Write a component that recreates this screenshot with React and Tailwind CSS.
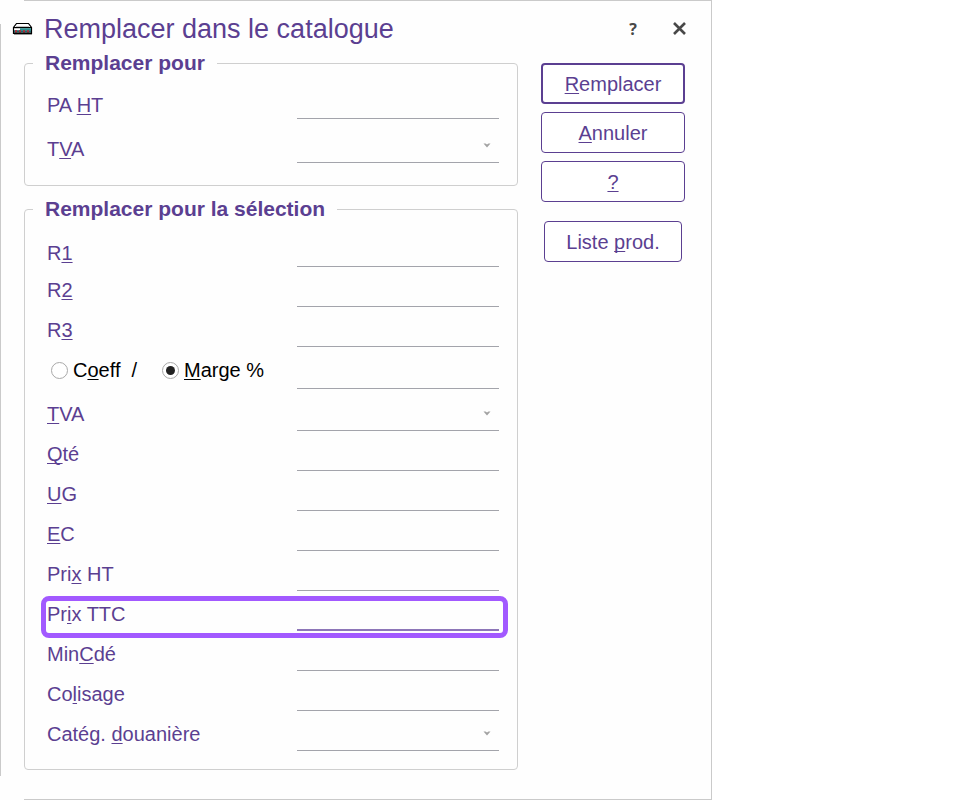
import { useState } from 'react'
import clsx from 'clsx'

// `hot` is the index of the access-key letter in each label
const TARGET_FIELDS = [
  { id: 'pa-ht', label: 'PA HT', hot: 3 },
  { id: 'tva', label: 'TVA', hot: 1, type: 'select' },
]

const SELECTION_FIELDS = [
  { id: 'r1', label: 'R1', hot: 1, low: true },
  { id: 'r2', label: 'R2', hot: 1 },
  { id: 'r3', label: 'R3', hot: 1 },
  { id: 'marge', type: 'rate' },
  { id: 'sel-tva', label: 'TVA', hot: 0, type: 'select' },
  { id: 'qte', label: 'Qté', hot: 0 },
  { id: 'ug', label: 'UG', hot: 0 },
  { id: 'ec', label: 'EC', hot: 0 },
  { id: 'prix-ht', label: 'Prix HT', hot: 3 },
  { id: 'prix-ttc', label: 'Prix TTC', hot: 2, highlighted: true },
  { id: 'mincde', label: 'MinCdé', hot: 3 },
  { id: 'colisage', label: 'Colisage', hot: 2 },
  { id: 'categ', label: 'Catég. douanière', hot: 7, type: 'select' },
]

export default function App() {
  return (
    <div
      role="dialog"
      aria-labelledby="dialog-title"
      className="relative w-full max-w-[712px] pb-[30px] text-xl leading-6 text-[#5b3f91] bg-[#fefefe] border-r border-[#cacaca] font-['Liberation_Sans',Arial,sans-serif] before:absolute before:pointer-events-none before:left-0 before:inset-y-6 before:border-l before:border-[#cacaca] after:absolute after:pointer-events-none after:left-6 after:right-0 after:inset-y-0 after:border-y after:border-[#cacaca]"
    >
      <TitleBar />

      <form className="relative z-10 flex gap-[23px] pl-6 pr-[26px]" onSubmit={(e) => e.preventDefault()}>
        <div className="flex-1 min-w-0 space-y-[11px]">
          <Group title="Remplacer pour" className="pb-[22px]">
            {TARGET_FIELDS.map((f) => (
              <Field key={f.id} field={f} className="h-11" low />
            ))}
          </Group>

          <Group title="Remplacer pour la sélection" className="pb-[18px]">
            <div className="pt-[6px]">
              {SELECTION_FIELDS.map((f) => (
                <Field
                  key={f.id}
                  field={f}
                  low={f.low}
                  className={f.type === 'rate' || f.id === 'sel-tva' ? 'h-[42px]' : 'h-10'}
                />
              ))}
            </div>
          </Group>
        </div>

        <div className="flex flex-col gap-2 w-36 pt-3">
          <ActionButton type="submit" label="Remplacer" hot={0} className="border-2" />
          <ActionButton label="Annuler" hot={0} className="border" />
          <ActionButton label="?" hot={0} className="border" />
          <ActionButton label="Liste prod." hot={6} className="border mt-[11px] mx-[3px]" />
        </div>
      </form>
    </div>
  )
}

function TitleBar() {
  return (
    <header className="relative z-10 flex items-center h-[51px] pt-[6px] pl-3 pr-[26px]">
      <DeviceIcon />
      <h1 id="dialog-title" className="ml-[11px] text-[27px] leading-9">
        Remplacer dans le catalogue
      </h1>
      <div className="flex items-center gap-7 ml-auto text-[#484848]">
        <button type="button" aria-label="Aide" className="w-6 h-6 text-base leading-6 font-bold font-['Open_Sans',sans-serif]">
          ?
        </button>
        <button type="button" aria-label="Fermer" className="flex items-center justify-center w-3 h-6">
          <svg width="13" height="13" viewBox="0 0 13 13" className="shrink-0" stroke="currentColor" strokeWidth="2.6">
            <path d="M1 1l11 11M12 1L1 12" />
          </svg>
        </button>
      </div>
    </header>
  )
}

function Group({ title, className, children }) {
  return (
    <fieldset className={clsx('min-w-0 pl-[22px] pr-[18px] border border-[#cfcfcf] rounded', className)}>
      <legend className="-ml-[14px] px-3 text-[21px] leading-6 font-bold">{title}</legend>
      {children}
    </fieldset>
  )
}

function Field({ field, low, className }) {
  const { id, label, hot, type, highlighted } = field
  const line = highlighted ? 'border-[#8d76b8]' : 'border-[#a3a4ab]'

  return (
    <div className={clsx('relative grid grid-cols-[250px_1fr] items-end', className)}>
      {type === 'rate' ? (
        <RateChoice />
      ) : (
        <label htmlFor={id} className={clsx('whitespace-nowrap', low ? 'mb-0.5' : 'mb-[5px]')}>
          <HotText text={label} hot={hot} />
        </label>
      )}

      {type === 'select' ? (
        <div className="relative h-8">
          <select id={id} className={clsx('block w-full h-8 appearance-none bg-transparent border-b outline-none', line)} />
          <svg width="8" height="5" viewBox="0 0 8 5" className="absolute right-2 top-3 pointer-events-none">
            <path d="M0.5 0.5h2L4 1.6 5.5 0.5h2L4 4.6z" fill="#a2a2a2" />
          </svg>
        </div>
      ) : (
        <input
          id={id}
          type="text"
          aria-label={type === 'rate' ? 'Valeur' : undefined}
          className={clsx('block w-full h-8 bg-transparent outline-none', highlighted ? 'border-b-2' : 'border-b', line)}
        />
      )}

      {highlighted && (
        <div className="absolute top-[5px] -bottom-[7px] -left-[6px] -right-[9px] z-10 border-5 border-[#a259ff] rounded-lg pointer-events-none" />
      )}
    </div>
  )
}

function RateChoice() {
  const [mode, setMode] = useState('marge')

  return (
    <div role="radiogroup" className="flex items-center mb-[7px] pl-1 text-black">
      <Radio label="Coeff" hot={1} checked={mode === 'coeff'} onChange={() => setMode('coeff')} />
      <span className="ml-[11px] mr-[25px]">/</span>
      <Radio label="Marge %" hot={0} checked={mode === 'marge'} onChange={() => setMode('marge')} />
    </div>
  )
}

function Radio({ label, hot, checked, onChange }) {
  return (
    <label className="flex items-center gap-[5px] whitespace-nowrap">
      <input
        type="radio"
        name="mode"
        checked={checked}
        onChange={onChange}
        className="grid place-content-center w-[17px] h-[17px] appearance-none rounded-full border border-[#a9a9a9] bg-white checked:before:block checked:before:w-[9px] checked:before:h-[9px] checked:before:rounded-full checked:before:bg-[#222]"
      />
      <span>
        <HotText text={label} hot={hot} />
      </span>
    </label>
  )
}

function ActionButton({ label, hot, className, type = 'button' }) {
  return (
    <button type={type} className={clsx('h-[41px] rounded border-[#5b3f91] bg-white whitespace-nowrap', className)}>
      <HotText text={label} hot={hot} />
    </button>
  )
}

function HotText({ text, hot }) {
  return (
    <>
      {text.slice(0, hot)}
      <u className="underline-offset-2 decoration-1 [text-decoration-skip-ink:none]">{text[hot]}</u>
      {text.slice(hot + 1)}
    </>
  )
}

function DeviceIcon() {
  return (
    <svg width="21" height="14" viewBox="0 0 21 14" className="shrink-0">
      <path d="M4.5 1.5h12l3 4v6h-18v-6z" fill="#fff" stroke="#000" strokeWidth="1.2" />
      <path d="M4 4.5h13" stroke="#c4c4c4" />
      <path d="M1 5h19v1.2H1z" fill="#000" />
      <path d="M8 6.2h11v2H8z" fill="#2c8f8f" />
      <path d="M2 8.2h17v2.3H2z" fill="#176a6c" />
      <path d="M3 8.2h2v2.3H3zM7 8.2h2v2.3H7zM11 8.2h2v2.3h-2zM15 8.2h2v2.3h-2z" fill="#b32635" />
      <path d="M1 10.5h19v1.3H1z" fill="#000" />
      <path d="M2 12h18v1H2z" fill="#9a9a9a" />
    </svg>
  )
}
